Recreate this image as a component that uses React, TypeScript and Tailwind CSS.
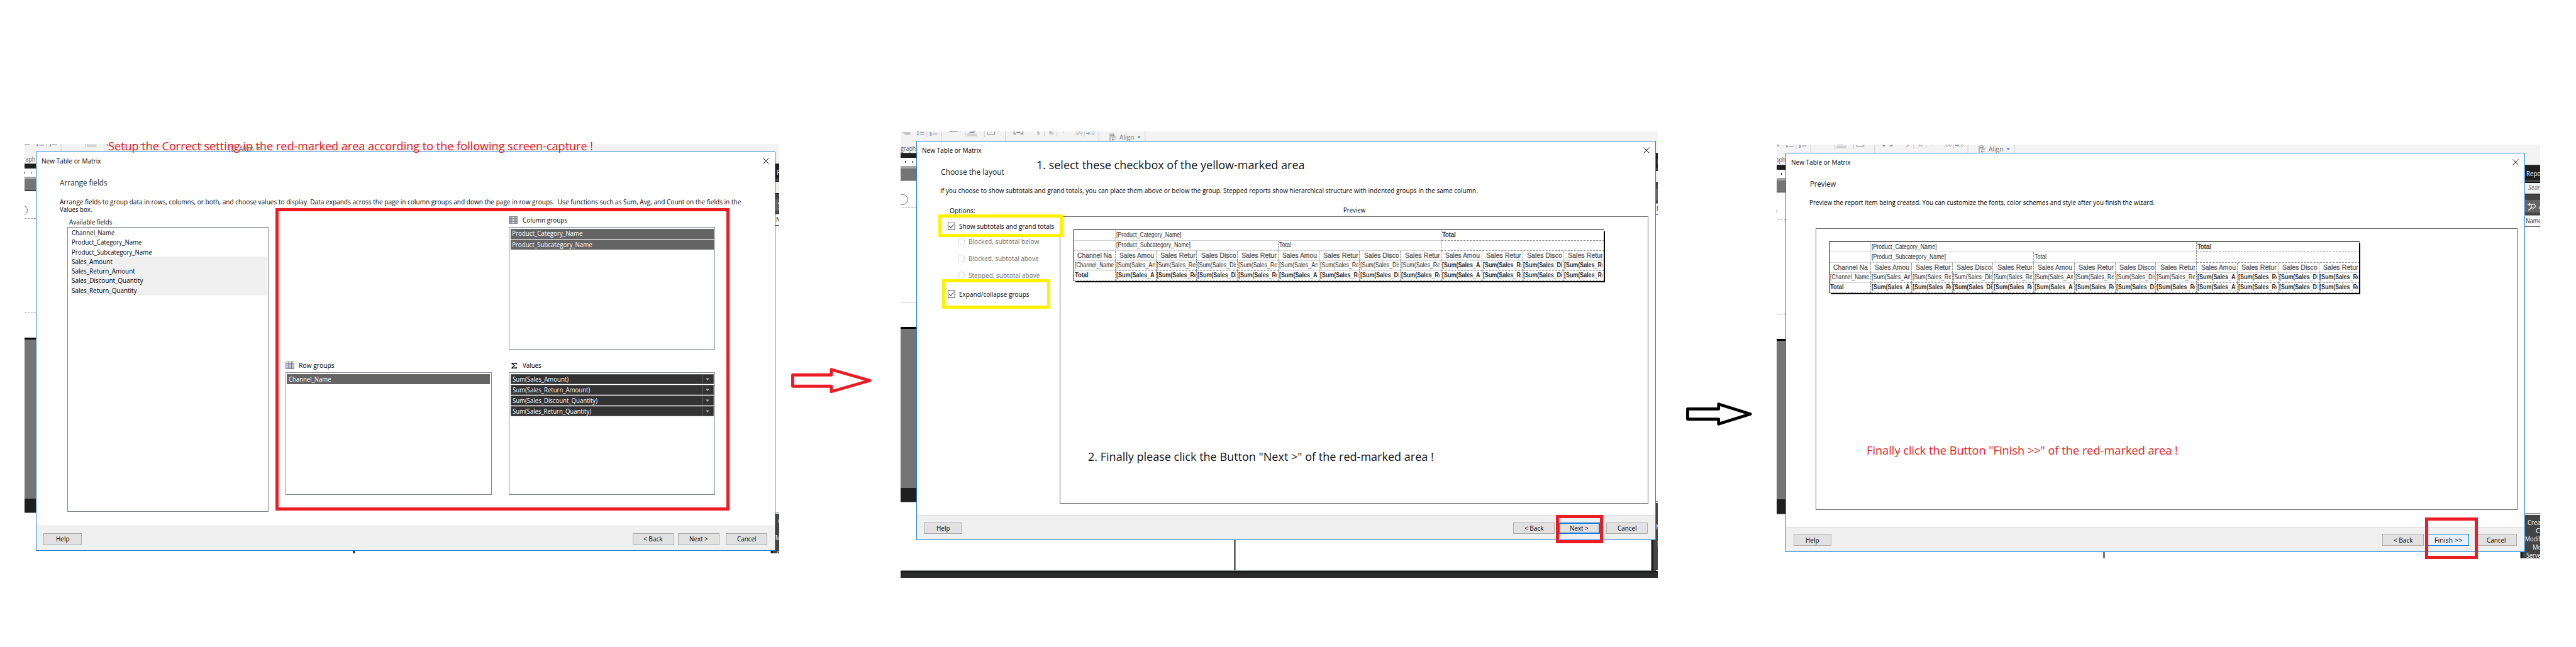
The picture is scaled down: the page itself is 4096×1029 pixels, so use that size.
import { useLayoutEffect, useRef, type ReactNode } from "react";

/** Single-line label whose glyphs are condensed or widened to fill the width of its box. */
function T({ className = "", children }: { className?: string; children: ReactNode }) {
  const box = useRef<HTMLSpanElement>(null);
  const ink = useRef<HTMLSpanElement>(null);
  useLayoutEffect(() => {
    if (!box.current || !ink.current) return;
    ink.current.style.transform = "none";
    const ratio = box.current.getBoundingClientRect().width / ink.current.getBoundingClientRect().width;
    ink.current.style.transform = `scaleX(${ratio})`;
  });
  return (
    <span ref={box} className={`block shrink-0 whitespace-pre ${className}`}>
      <span ref={ink} className="inline-block origin-left">
        {children}
      </span>
    </span>
  );
}

/* ---------- application window behind the dialogs ---------- */

function Ribbon() {
  const sep = "#c9c9c9";
  return (
    <svg className="absolute left-[-30px] top-[-17px]" width="440" height="17" viewBox="-30 -17 440 17" fill="none">
      <g stroke="#7a7a7a" strokeWidth="1">
        <path d="M-25 -14.5H-11M-21 -12.5H-11" />
        <path d="M6 -15.5H14M6 -11.5H14M29 -12.5H37M58 -16.5H73" />
        <path d="M125.500 -17V-11.500H138.500V-17M132 -17V-15" />
      </g>
      <g fill="#7f9fd0">
        <path d="M1 -17h3v2h-3zM1 -13h3v3h-3z" />
        <path d="M23 -16h3v2h-3zM24 -13.500h3v4h-4v-1h2z" />
        <path d="M91 -14L97 -17H105L101 -14Z" />
        <path d="M77 -17h2l-1 1zM110 -17h2l-1 1zM145 -17h2l-1 1z" />
        <path d="M300 -14.500h4v-2l3 3l-3 3v-2h-4z" />
      </g>
      <path d="M90 -13H107V-8H90Z" fill="#d2d2d2" />
      <g stroke={sep}>
        <path d="M18.500 -17V-7M87.500 -17V-7M120.500 -17V-7M226.500 -17V-8M248.500 -17V-8M297.500 -17V-8" />
        <path d="M44.500 -17V0M157.500 -17V0M322.500 -17V0M404.500 -17V0" />
      </g>
      <path d="M172.500 -17V-12.500H176M188.500 -17V-12.500H184M177 -15.500H184" stroke="#333" />
      <g fill="#8a8a8a" fontFamily="Open Sans, sans-serif" fontSize="10">
        <text x="213" y="-12">$</text>
        <text x="234" y="-12">%</text>
        <text x="259" y="-15">,</text>
        <text x="280" y="-11">.00</text>
        <text x="307" y="-11">.0</text>
      </g>
      <path d="M342.500 -13V0M344 -12.500H349.500V-9.500H344M352 -2.500H346M348.500 -5L346 -2.500L348.500 0" stroke="#6d6d6d" />
      <path d="M345 -9H353V-5H345Z" fill="#c4c4c4" />
      <path d="M391 -8H396.500L393.750 -5Z" fill="#3f6fae" />
    </svg>
  );
}

function LeftStrip() {
  return (
    <div className="absolute left-[-30px] top-0 flex w-[30px] flex-col overflow-hidden">
      <div className="flex h-[21px] items-end justify-end bg-[#f3f3f3]">
        <T className="w-[27px] text-[12.5px] leading-[16px] text-[#666]">graph</T>
      </div>
      <div className="h-[9px] border-t border-[#555] bg-[#1f1f1f]" />
      <div className="flex h-[14px] items-center gap-[11px] bg-white pl-[10px]">
        <span className="h-[3px] w-px bg-black" />
        <span className="h-[3px] w-px bg-black" />
      </div>
      <div className="h-[5px] bg-[#a5a5a5]" />
      <div className="h-[20px] bg-[#757575]" />
      <div className="h-px bg-black" />
      <div className="h-[49px] border-b border-dashed border-[#999] bg-white pt-[24px]">
        <div className="ml-[-4px] h-[19px] w-[20px] rounded-full border-[1.5px] border-[#6c6c6c]" />
      </div>
      <div className="h-[167px] border-b border-dashed border-[#999] bg-white" />
      <div className="h-[43px] bg-white" />
      <div className="h-[3px] bg-black" />
      <div className="h-[281px] bg-[#757575]" />
      <div className="h-[25px] bg-[#1f1f1f]" />
      <div className="h-px bg-[#8a8a90]" />
    </div>
  );
}

function RightStrip() {
  return (
    <div className="absolute left-[1307px] top-0 flex w-[27px] flex-col overflow-hidden text-[12.5px] leading-[14px] text-white">
      <div className="h-[21px] bg-[#f3f3f3]" />
      <div className="flex h-[27px] items-center border-t border-[#444] bg-[#1f1f1f] pl-[2px] pt-[4px]">
        <T className="w-[26px]">Repo</T>
      </div>
      <div className="h-[4px] bg-[#444]" />
      <div className="flex h-[22px] items-start border-y border-black bg-[#f0f0f0] pl-[6px] pt-[1px] text-[#777]">
        <T className="w-[21px] italic">Sear</T>
      </div>
      <div className="h-[10px] bg-[#444]" />
      <div className="flex h-[22px] items-center gap-[5px] bg-[#656565] pl-[5px]">
        <svg className="shrink-0" width="15" height="15" viewBox="0 0 15 15" fill="none" stroke="#fff">
          <path d="M0 3.500H6M3 0.500V6.500" strokeWidth="1.600" />
          <circle cx="10" cy="6.500" r="3.600" strokeWidth="1.300" />
          <path d="M7 9.500L1.500 14" strokeWidth="2" />
        </svg>
        <span className="italic">A</span>
      </div>
      <div className="h-[4px] bg-[#444]" />
      <div className="h-px bg-[#8c8c98]" />
      <div className="flex h-[20px] items-center border-b border-[#444] bg-[#fafafa] pl-[1px] text-[#222]">
        <T className="w-[28px]">Name</T>
      </div>
      <div className="h-[506px] bg-white" />
      <div className="h-px bg-[#85858f]" />
      <div className="h-[2px] bg-[#f0f0f0]" />
      <div className="flex h-[119px] flex-col items-start bg-[#444] pt-[6px] leading-[14.5px]">
        <T className="ml-[5px] w-[23px]">Crea</T>
        <span className="ml-[19px]">C</span>
        <T className="w-[27px]">Modif</T>
        <T className="ml-[14px] w-[16px]">Mo</T>
        <T className="ml-[2px] w-[26px]">Serve</T>
      </div>
    </div>
  );
}

/** Slice of the report designer, placed relative to the dialog's top-left corner. */
function Desktop() {
  return (
    <>
      <div className="absolute left-[-30px] top-[-17px] h-[38px] w-[1364px] bg-[#f3f3f3]" />
      <Ribbon />
      <T className="absolute left-[359px] top-[-14px] w-[26px] text-[12.5px] leading-[16px] text-[#6d6d6d]">Align</T>
      <LeftStrip />
      <RightStrip />
      <div className="absolute left-[561px] top-[706px] h-[54px] w-[4px] border-x border-[#8a8f96] bg-[#1f1f1f]" />
      <div className="absolute left-[1298px] top-[706px] h-[54px] w-[5px] border-l border-[#8a8f96] bg-[#1f1f1f]" />
      <div className="absolute left-[1303px] top-[706px] h-[54px] w-[4px] bg-[#444]" />
      <div className="absolute left-[-30px] top-[759px] flex w-[1364px] flex-col">
        <div className="h-px w-[1329px] bg-[#7f858c]" />
        <div className="h-[3px] bg-[#1f1f1f]" />
        <div className="h-px bg-[#4a4a4a]" />
        <div className="h-[9px] bg-[#2c2c2c]" />
      </div>
    </>
  );
}

/* ---------- dialog ---------- */

type Action = { label: string; w: string; tone?: string };

function Button({ label, w, tone = "border border-[#adadad] bg-[#e1e1e1]", size = "w-[73px]" }: Action & { size?: string }) {
  return (
    <button className={`flex h-[21px] shrink-0 items-center justify-center text-[12.5px] leading-[16px] text-black ${size} ${tone}`}>
      <T className={w}>{label}</T>
    </button>
  );
}

function Dialog({ heading, headingW, children, next }: { heading: string; headingW: string; children: ReactNode; next: Action }) {
  return (
    <section className="flex h-[706px] w-[1307px] flex-col border border-[#1883d7] bg-white">
      <header className="flex h-[31px] items-center justify-between pl-[9px] pr-[10px]">
        <T className="w-[105px] text-[12.5px] leading-[16px]">New Table or Matrix</T>
        <svg width="11" height="11" viewBox="0 0 11 11" stroke="#000" strokeWidth="1.100">
          <path d="M0.500 0.500L10.500 10.500M10.500 0.500L0.500 10.500" />
        </svg>
      </header>
      <div className="flex h-[44px] items-center pl-[42px]">
        <T className={`text-[14.5px] leading-[20px] text-[#1c1c1c] ${headingW}`}>{heading}</T>
      </div>
      <div className="h-[585px] shrink-0">{children}</div>
      <footer className="flex h-[44px] items-start border-t border-[#dadada] bg-[#f0f0f0] pl-[13px] pr-[13px] pt-[12px]">
        <Button label="Help" w="w-[24px]" size="w-[67px]" />
        <div className="ml-auto flex gap-[7px]">
          <Button label="< Back" w="w-[34px]" />
          <Button {...next} />
          <div className="pl-[5px]">
            <Button label="Cancel" w="w-[34px]" />
          </div>
        </div>
      </footer>
    </section>
  );
}

/* ---------- step 1: arrange fields ---------- */

const FIELDS = [
  { name: "Channel_Name", w: "w-[76px]" },
  { name: "Product_Category_Name", w: "w-[124px]" },
  { name: "Product_Subcategory_Name", w: "w-[142px]" },
  { name: "Sales_Amount", w: "w-[72px]", used: true },
  { name: "Sales_Return_Amount", w: "w-[112px]", used: true },
  { name: "Sales_Discount_Quantity", w: "w-[126px]", used: true },
  { name: "Sales_Return_Quantity", w: "w-[115px]", used: true },
];

const VALUES = [
  { name: "Sum(Sales_Amount)", w: "w-[99px]" },
  { name: "Sum(Sales_Return_Amount)", w: "w-[137px]" },
  { name: "Sum(Sales_Discount_Quantity)", w: "w-[150px]" },
  { name: "Sum(Sales_Return_Quantity)", w: "w-[139px]" },
];

function GridIcon({ columns }: { columns?: boolean }) {
  return (
    <svg width="16" height="13" viewBox="0 0 16 13">
      <path d="M0 0H16V13H0Z" fill="#fff" />
      {columns ? (
        <path d="M0 0H5V13H0ZM10 0H16V13H10Z" fill="#a9c6e2" />
      ) : (
        <path d="M0 3H16V6H0ZM0 9H16V13H0Z" fill="#b3c8e4" />
      )}
      <path d="M0.500 0.500H15.500V12.500H0.500ZM5.500 0.500V12.500M10.500 0.500V12.500M0.500 3.500H15.500M0.500 6.500H15.500M0.500 9.500H15.500" fill="none" stroke="#6b6b6b" />
    </svg>
  );
}

function GroupBox({ icon, title, titleW, children }: { icon: ReactNode; title: string; titleW: string; children?: ReactNode }) {
  return (
    <div className="flex flex-col">
      <div className="flex h-[20px] items-start">
        <div className="flex h-[16px] w-[24px] items-center">{icon}</div>
        <T className={`text-[12.5px] leading-[15px] ${titleW}`}>{title}</T>
      </div>
      <div className="flex h-[217px] w-[365px] flex-col gap-px border border-[#828790] p-[2px]">{children}</div>
    </div>
  );
}

function Chip({ name, w }: { name: string; w: string }) {
  return (
    <div className="flex h-[18px] shrink-0 items-center bg-[#656565] pl-[3px] text-[12.5px] leading-[16px] text-white">
      <T className={w}>{name}</T>
    </div>
  );
}

function ArrangeFields() {
  return (
    <div className="flex h-full flex-col text-[12.5px] text-black">
      <div className="h-[43px] pl-[41px] pt-[6px] leading-[13px]">
        <T className="w-[1204px]">
          {"Arrange fields to group data in rows, columns, or both, and choose values to display. Data expands across the page in column groups and down the page in row groups.  Use functions such as Sum, Avg, and Count on the fields in the"}
        </T>
        <T className="w-[57px]">Values box.</T>
      </div>
      <div className="flex pl-[55px]">
        <div className="mr-[30px] flex flex-col">
          <div className="h-[14px] pl-[3px]">
            <T className="w-[76px] leading-[10px]">Available fields</T>
          </div>
          <div className="flex h-[504px] w-[355px] flex-col border border-[#828790] py-px pl-[5px] pr-px">
            {FIELDS.map((f) => (
              <div key={f.name} className={f.used ? "flex h-[17px] items-center bg-[#f0f0f0] pl-[2px]" : "flex h-[17px] items-center pl-[2px]"}>
                <T className={`leading-[16px] ${f.w}`}>{f.name}</T>
              </div>
            ))}
          </div>
        </div>
        <div className="mt-[-6px] grid grid-cols-[365px_365px] grid-rows-[237px_237px] gap-x-[30px] gap-y-[20px]">
          <div />
          <GroupBox icon={<GridIcon columns />} title="Column groups" titleW="w-[79px]">
            <Chip name="Product_Category_Name" w="w-[125px]" />
            <Chip name="Product_Subcategory_Name" w="w-[142px]" />
          </GroupBox>
          <GroupBox icon={<GridIcon />} title="Row groups" titleW="w-[63px]">
            <Chip name="Channel_Name" w="w-[75px]" />
          </GroupBox>
          <GroupBox
            icon={
              <svg className="ml-[4px]" width="10" height="10" viewBox="0 0 10 10" fill="none" stroke="#000" strokeWidth="1.500">
                <path d="M9.200 2.600V0.800H1L5.600 5L1 9.200H9.200V7.400" />
              </svg>
            }
            title="Values"
            titleW="w-[33px]"
          >
            {VALUES.map((v) => (
              <div key={v.name} className="flex h-[18px] shrink-0 border border-[#656565] bg-[#333] text-white">
                <div className="flex flex-1 items-center pl-[2px]">
                  <T className={`leading-[15px] ${v.w}`}>{v.name}</T>
                </div>
                <div className="flex w-[20px] items-center justify-center border-l border-[#656565]">
                  <svg width="7" height="5" viewBox="0 0 7 5" fill="#a8a8a8">
                    <path d="M0 0.500H7L3.500 4.500Z" />
                  </svg>
                </div>
              </div>
            ))}
          </GroupBox>
        </div>
      </div>
    </div>
  );
}

/* ---------- matrix preview ---------- */

const SOLID = "border-b border-b-[#d3d3d3]";
const DASH = "border-b border-dashed border-b-[#8c8c8c]";
const VSOLID = "border-r border-r-[#d3d3d3]";
const VDASH = "border-r border-r-[#8c8c8c] [border-right-style:dashed]";

const MEASURES = [
  { head: "Sales Amou", headW: "w-[61px]", sum: "[Sum(Sales_Am", sumW: "w-[72px]", boldW: "w-[76px]" },
  { head: "Sales Retur", headW: "w-[62px]", sum: "[Sum(Sales_Re", sumW: "w-[69px]", boldW: "w-[72px]" },
  { head: "Sales Disco", headW: "w-[62px]", sum: "[Sum(Sales_Dis", sumW: "w-[71px]", boldW: "w-[75px]" },
  { head: "Sales Retur", headW: "w-[62px]", sum: "[Sum(Sales_Re", sumW: "w-[69px]", boldW: "w-[72px]" },
];
const COLUMNS = [...MEASURES, ...MEASURES, ...MEASURES];

function Cell({ className = "", children }: { className?: string; children?: ReactNode }) {
  return (
    <div className={`flex h-[18px] items-center pl-px pr-[2px] ${className}`}>
      <div className="flex min-w-0 flex-1 overflow-hidden">{children}</div>
    </div>
  );
}

function MatrixPreview() {
  return (
    <div className="relative h-[93px] w-[939px] text-[11.5px] leading-[16px] text-[#2b2b2b]">
      <div className="absolute right-0 top-[3px] h-[90px] w-[2px] bg-black" />
      <div className="absolute bottom-0 right-0 h-[2px] w-[936px] bg-black" />
      <div className="grid h-[91px] w-[938px] grid-cols-[73px_repeat(12,72px)] border-l border-t border-black bg-white font-['Liberation_Sans',Arial,sans-serif]">
        <Cell className={`${SOLID} ${VSOLID}`} />
        <Cell className={`col-span-8 ${SOLID} ${VDASH}`}>
          <T className="w-[115px]">[Product_Category_Name]</T>
        </Cell>
        <Cell className={`col-span-4 ${DASH} ${VDASH}`}>
          <T className="w-[24px] [-webkit-text-stroke:0.300px]">Total</T>
        </Cell>

        <Cell className={`${SOLID} ${VSOLID}`} />
        <Cell className={`col-span-4 ${SOLID} ${VDASH}`}>
          <T className="w-[131px]">[Product_Subcategory_Name]</T>
        </Cell>
        <Cell className={`col-span-4 ${SOLID} ${VDASH}`}>
          <T className="w-[21px]">Total</T>
        </Cell>
        <Cell className={`col-span-4 ${DASH} ${VDASH}`} />

        <Cell className={`text-[#5a5a5a] ${SOLID} ${VDASH}`}>
          <T className="ml-[5px] w-[61px] text-[12px] [-webkit-text-stroke:0.350px]">Channel Na</T>
        </Cell>
        {COLUMNS.map((c, i) => (
          <Cell key={i} className={`text-[#5a5a5a] ${SOLID} ${VDASH}`}>
            <T className={`ml-[6px] text-[12px] [-webkit-text-stroke:0.350px] ${c.headW}`}>{c.head}</T>
          </Cell>
        ))}

        <Cell className={`${SOLID} ${VDASH}`}>
          <T className="w-[69px]">[Channel_Name</T>
        </Cell>
        {COLUMNS.map((c, i) => (
          <Cell key={i} className={`${VDASH} ${i >= 4 && i < 8 ? SOLID : DASH}`}>
            <T className={i < 8 ? c.sumW : `font-bold ${c.boldW}`}>{c.sum}</T>
          </Cell>
        ))}

        <Cell className={`font-bold ${DASH} ${VDASH}`}>
          <T className="w-[24px]">Total</T>
        </Cell>
        {COLUMNS.map((c, i) => (
          <Cell key={i} className={`font-bold ${DASH} ${VDASH}`}>
            <T className={c.boldW}>{c.sum}</T>
          </Cell>
        ))}
      </div>
    </div>
  );
}

/* ---------- step 2: choose the layout ---------- */

function Check({ label, w }: { label: string; w: string }) {
  return (
    <div className="flex items-center gap-[7px]">
      <svg width="13" height="13" viewBox="0 0 13 13" fill="none" stroke="#333">
        <path d="M0.500 0.500H12.500V12.500H0.500Z" />
        <path d="M2.500 6.500L5.200 9.200L10.500 3.500" strokeWidth="1.200" />
      </svg>
      <T className={`leading-[16px] ${w}`}>{label}</T>
    </div>
  );
}

function Radio({ label, w }: { label: string; w: string }) {
  return (
    <div className="flex items-center gap-[6px] pl-[17px] text-[#6d6d6d]">
      <span className="size-[13px] rounded-full border border-[#cfcfcf]" />
      <T className={`leading-[16px] ${w}`}>{label}</T>
    </div>
  );
}

function ChooseLayout() {
  return (
    <div className="flex h-full flex-col text-[12.5px] text-black">
      <div className="h-[40px] pl-[41px] pt-[4px]">
        <T className="w-[950px] leading-[16px]">
          If you choose to show subtotals and grand totals, you can place them above or below the group. Stepped reports show hierarchical structure with indented groups in the same column.
        </T>
      </div>
      <div className="flex">
        <div className="flex w-[253px] flex-col pl-[55px]">
          <T className="ml-[3px] w-[45px] leading-[16px]">Options:</T>
          <div className="flex flex-col pt-[11px]">
            <Check label="Show subtotals and grand totals" w="w-[168px]" />
          </div>
          <div className="flex flex-col gap-[14px] pt-[11px]">
            <Radio label="Blocked, subtotal below" w="w-[125px]" />
            <Radio label="Blocked, subtotal above" w="w-[124px]" />
            <Radio label="Stepped, subtotal above" w="w-[126px]" />
          </div>
          <div className="pt-[17px]">
            <Check label="Expand/collapse groups" w="w-[124px]" />
          </div>
        </div>
        <div className="flex flex-col">
          <div className="flex h-[17px] justify-center">
            <T className="mt-[-1px] w-[39px] leading-[16px]">Preview</T>
          </div>
          <div className="h-[508px] w-[1040px] border border-[#646464] pl-[23px] pt-[23px]">
            <MatrixPreview />
          </div>
        </div>
      </div>
    </div>
  );
}

/* ---------- step 3: preview ---------- */

function PreviewStep() {
  return (
    <div className="flex h-full flex-col text-[12.5px] text-black">
      <div className="h-[57px] pl-[41px] pt-[4px]">
        <T className="w-[610px] leading-[16px]">
          Preview the report item being created. You can customize the fonts, color schemes and style after you finish the wizard.
        </T>
      </div>
      <div className="ml-[52px] h-[498px] w-[1241px] border border-[#646464] pl-[23px] pt-[23px]">
        <MatrixPreview />
      </div>
    </div>
  );
}

/* ---------- board ---------- */

export default function App() {
  return (
    <main className="h-[1029px] w-[4096px] overflow-hidden bg-white font-['Open_Sans','Noto_Sans',sans-serif]">
      <div className="flex h-[1144px] w-[4552px] items-start pl-[43px] [zoom:0.8998]">
        <div className="relative mt-[255px] h-[723px] w-[1334px] shrink-0">
          <div className="absolute inset-0 overflow-hidden">
            <div className="absolute left-[20px] top-[13px]">
              <Desktop />
            </div>
          </div>
          <div className="absolute left-[20px] top-[13px]">
            <Dialog heading="Arrange fields" headingW="w-[84px]" next={{ label: "Next >", w: "w-[33px]" }}>
              <ArrangeFields />
            </Dialog>
          </div>
          <div className="absolute left-[444px] top-[113px] h-[534px] w-[802px] border-[5.6px] border-[#ed1c24]" />
          <T className="absolute left-[148px] top-[-11px] w-[857px] text-[21px] leading-[28px] text-[#ed1c24]">
            Setup the Correct setting in the red-marked area according to the following screen-capture !
          </T>
        </div>

        <div className="flex w-[215px] shrink-0 pl-[21px] pt-[650px]">
          <svg width="142" height="46" viewBox="0 0 142 46" fill="none" stroke="#ed1c24" strokeWidth="5.300" strokeLinejoin="round">
            <path d="M2.700 12.500H71V3L139 22.500L71 42V32.500H2.700Z" />
          </svg>
        </div>

        <div className="relative mt-[232px] h-[789px] w-[1338px] shrink-0">
          <div className="absolute inset-0 overflow-hidden">
            <div className="absolute left-[27px] top-[17px]">
              <Desktop />
            </div>
          </div>
          <div className="absolute left-[27px] top-[17px]">
            <Dialog heading="Choose the layout" headingW="w-[112px]" next={{ label: "Next >", w: "w-[33px]", tone: "border-[2.300px] border-[#0078d7] bg-[#e1e1e1]" }}>
              <ChooseLayout />
            </Dialog>
          </div>
          <T className="absolute left-[240px] top-[46px] w-[474px] text-[21px] leading-[28px] text-[#111]">
            1. select these checkbox of the yellow-marked area
          </T>
          <T className="absolute left-[331px] top-[561px] w-[611px] text-[21px] leading-[28px] text-[#111]">
            {'2. Finally please click the Button "Next >" of the red-marked area !'}
          </T>
          <div className="absolute left-[66px] top-[147px] h-[40px] w-[220px] border-[5.6px] border-[#fff200]" />
          <div className="absolute left-[73px] top-[261px] h-[53px] w-[191px] border-[5.6px] border-[#fff200]" />
          <div className="absolute left-[1158px] top-[678px] h-[50px] w-[83px] border-[5.6px] border-[#ed1c24]" />
        </div>

        <div className="flex w-[210px] shrink-0 pl-[50px] pt-[711px]">
          <svg width="117" height="42" viewBox="0 0 117 42" fill="none" stroke="#000" strokeWidth="5.300" strokeLinejoin="round">
            <path d="M2.700 11.500H57.500V3L113.500 20.500L57.500 38V29.500H2.700Z" />
          </svg>
        </div>

        <div className="relative mt-[256px] h-[731px] w-[1349px] shrink-0">
          <div className="absolute inset-0 overflow-hidden">
            <div className="absolute left-[15px] top-[14px]">
              <Desktop />
            </div>
          </div>
          <div className="absolute left-[15px] top-[14px]">
            <Dialog heading="Preview" headingW="w-[46px]" next={{ label: "Finish >>", w: "w-[49px]", tone: "border border-[#0078d7] bg-[#e5f1fb]" }}>
              <PreviewStep />
            </Dialog>
          </div>
          <T className="absolute left-[158px] top-[526px] w-[550px] text-[21px] leading-[28px] text-[#ed1c24]">
            {'Finally click the Button "Finish >>" of the red-marked area !'}
          </T>
          <div className="absolute left-[1145px] top-[659px] h-[73px] w-[94px] border-[5.6px] border-[#ed1c24]" />
        </div>
      </div>
    </main>
  );
}
